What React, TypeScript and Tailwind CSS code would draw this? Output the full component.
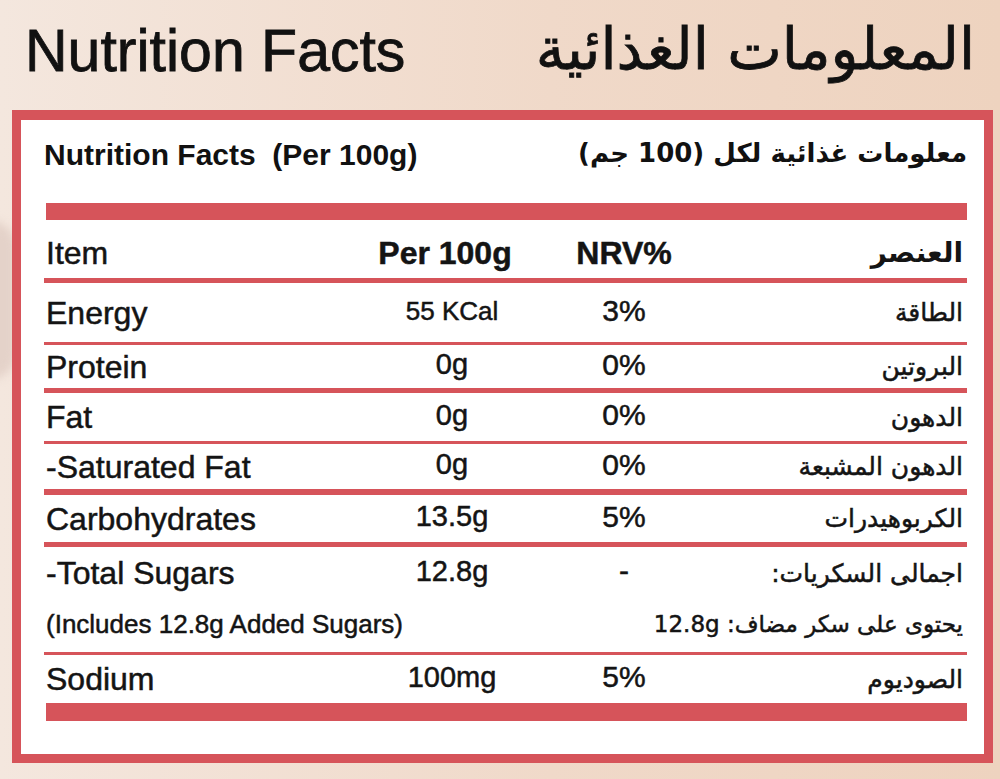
import React from 'react';

const en = "font-['Liberation_Sans',Arial,sans-serif]";
const ar = "font-['DejaVu_Sans','Noto_Sans',sans-serif]";
const ink = 'text-[#141414] [-webkit-text-stroke:0.5px_#141414]';

type Row = {
  label: string;
  value: string;
  nrv: string;
  arabic: string;
  height: string;
  line: string;
  valueSize?: string;
};

const rows: Row[] = [
  { label: 'Energy', value: '55 KCal', nrv: '3%', arabic: 'الطاقة', height: 'h-[59px]', line: 'h-[3px]', valueSize: 'text-[26px]' },
  { label: 'Protein', value: '0g', nrv: '0%', arabic: 'البروتين', height: 'h-[43px]', line: 'h-[5px]' },
  { label: 'Fat', value: '0g', nrv: '0%', arabic: 'الدهون', height: 'h-[48px]', line: 'h-[3px]' },
  { label: '-Saturated Fat', value: '0g', nrv: '0%', arabic: 'الدهون المشبعة', height: 'h-[45px]', line: 'h-[6px]' },
  { label: 'Carbohydrates', value: '13.5g', nrv: '5%', arabic: 'الكربوهيدرات', height: 'h-[47px]', line: 'h-[5px]' },
];

const cols = 'grid grid-cols-[338px_140px_204px_1fr] items-center';

function Cells({ label, value, nrv, arabic, valueSize = 'text-[29px]' }: Omit<Row, 'height' | 'line'>) {
  return (
    <>
      <span className={`${en} ${ink} pl-[2px] text-[32px] leading-none`}>{label}</span>
      <span className={`${en} ${ink} ${valueSize} -mt-[4px] text-center leading-none`}>{value}</span>
      <span className={`${en} ${ink} -mt-[4px] text-center text-[30px] leading-none`}>{nrv}</span>
      <span dir="rtl" className={`${ar} ${ink} pr-[4px] text-[25px] leading-none`}>
        {arabic}
      </span>
    </>
  );
}

export default function App() {
  return (
    <div className="relative h-[779px] w-[1000px] overflow-hidden bg-[linear-gradient(90deg,#f4e7de_0%,#f0d9c9_55%,#eed3bf_100%)]">
      <div className="absolute left-[-40px] top-[220px] h-[160px] w-[56px] rounded-full bg-[#e4d2c9] blur-[4px]" />

      <div className="flex h-[110px] items-start justify-between pl-[25px] pr-[25px] pt-[22px]">
        <h1 className={`${en} text-[59px] leading-none text-[#111] [-webkit-text-stroke:0.8px_#111]`}>Nutrition Facts</h1>
        <h1 dir="rtl" className={`${ar} -mt-[2px] text-[58px] leading-none text-[#111] [-webkit-text-stroke:0.8px_#111]`}>
          المعلومات الغذائية
        </h1>
      </div>

      <div className="relative ml-[12px] h-[653px] w-[981px] border-[9px] border-t-[10px] border-[#d6545a] bg-white">
        <div className="pl-[23px] pr-[17px]">
          <div className="flex h-[83px] items-start justify-between pt-[20px]">
            <span className={`${en} whitespace-pre text-[30px] font-bold leading-none text-[#111]`}>
              Nutrition Facts  (Per 100g)
            </span>
            <span dir="rtl" className={`${ar} text-[26px] font-bold leading-none text-[#111]`}>
              معلومات غذائية لكل (100 جم)
            </span>
          </div>

          <div className="ml-[2px] h-[17px] bg-[#d6545a]" />

          <div className={`${cols} h-[58px] pt-[8px]`}>
            <span className={`${en} ${ink} pl-[2px] text-[32px] leading-none`}>Item</span>
            <span className={`${en} ${ink} -ml-[14px] text-center text-[32px] font-bold leading-none`}>Per 100g</span>
            <span className={`${en} ${ink} text-center text-[32px] font-bold leading-none`}>NRV%</span>
            <span dir="rtl" className={`${ar} pr-[4px] text-[28px] font-bold leading-none text-[#141414]`}>
              العنصر
            </span>
          </div>
          <div className="h-[5px] bg-[#d6545a]" />

          {rows.map((r) => (
            <div key={r.label}>
              <div className={`${cols} ${r.height}`}>
                <Cells label={r.label} value={r.value} nrv={r.nrv} arabic={r.arabic} valueSize={r.valueSize} />
              </div>
              <div className={`${r.line} bg-[#d6545a]`} />
            </div>
          ))}

          <div className="h-[105px]">
            <div className={`${cols} h-[52px]`}>
              <Cells label="-Total Sugars" value="12.8g" nrv="-" arabic="اجمالى السكريات:" />
            </div>
            <div className="flex h-[50px] items-center justify-between">
              <span className={`${en} ${ink} pl-[2px] text-[26px] leading-none`}>
                (Includes 12.8g Added Sugars)
              </span>
              <span dir="rtl" className={`${ar} ${ink} pr-[4px] text-[23px] leading-none`}>
                يحتوى على سكر مضاف: 12.8g
              </span>
            </div>
          </div>
          <div className="h-[3px] bg-[#d6545a]" />

          <div className={`${cols} h-[48px]`}>
            <Cells label="Sodium" value="100mg" nrv="5%" arabic="الصوديوم" />
          </div>

          <div className="ml-[2px] h-[18px] bg-[#d6545a]" />
        </div>
      </div>
    </div>
  );
}
